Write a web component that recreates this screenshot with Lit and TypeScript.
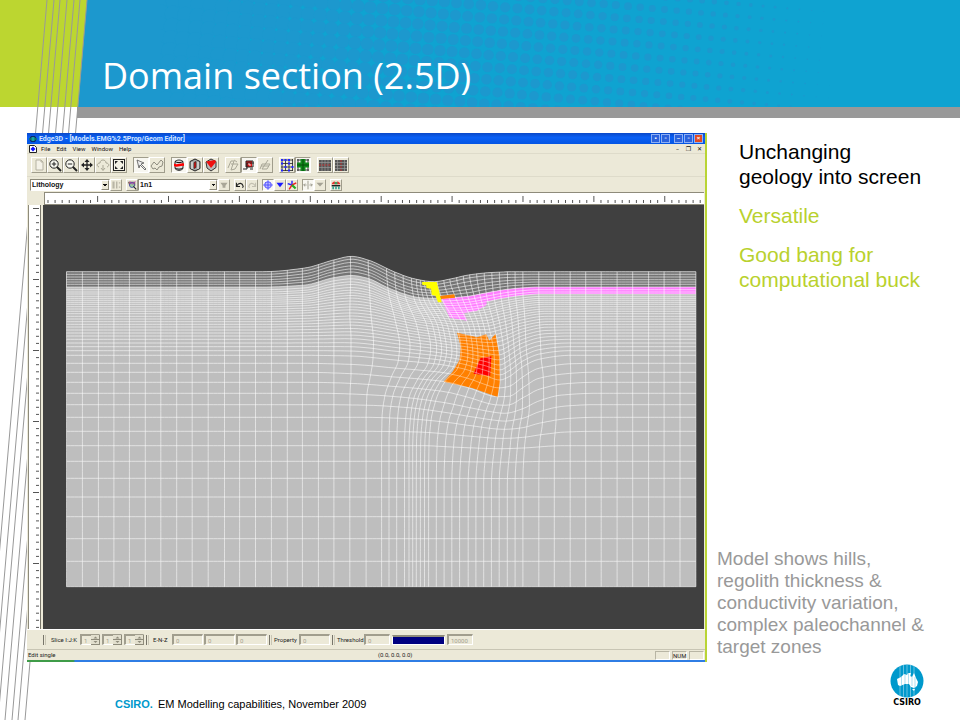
import { LitElement, html, svg, css } from "lit";
import { customElement, property } from "lit/decorators.js";

type Pair = [number, number];

/* Monotone cubic interpolation through a list of [position, value] pairs. */
function curve(p: Pair[], x: number): number {
  const n = p.length;
  if (x <= p[0][0]) return p[0][1];
  if (x >= p[n - 1][0]) return p[n - 1][1];
  let i = 0;
  while (x > p[i + 1][0]) i++;
  const slope = (k: number) => (p[k + 1][1] - p[k][1]) / (p[k + 1][0] - p[k][0]);
  const tangent = (k: number) => {
    if (k === 0 || k === n - 1) return 0;
    const a = slope(k - 1), b = slope(k);
    return a * b <= 0 ? 0 : (2 * a * b) / (a + b);
  };
  const h = p[i + 1][0] - p[i][0];
  const t = (x - p[i][0]) / h;
  return (2 * t ** 3 - 3 * t ** 2 + 1) * p[i][1] + (t ** 3 - 2 * t ** 2 + t) * h * tangent(i) +
    (-2 * t ** 3 + 3 * t ** 2) * p[i + 1][1] + (t ** 3 - t ** 2) * h * tangent(i + 1);
}

/* Vertical displacement of the mesh by depth level. */
const SINK: [number, Pair[]][] = [
  [65, [[500, 0], [600, -11], [670, -35], [715, -46], [755, -35], [820, 1], [870, 22], [915, 30], [960, 21], [1000, 10], [1050, 3], [1110, 0]]],
  [110, [[500, 0], [600, -6], [670, -28], [715, -35], [755, -26], [800, 0], [841, 20], [882, 32], [923, 34], [996, 28], [1045, 17], [1094, 7], [1127, 3], [1173, 0]]],
  [200, [[500, 0], [600, -2], [715, -10], [760, -5], [820, 10], [882, 25], [923, 32], [980, 40], [1040, 40], [1090, 26], [1134, 10], [1190, 0]]],
  [316, [[600, 0], [715, 2], [820, 14], [882, 21], [923, 26], [980, 38], [1040, 60], [1078, 74], [1100, 64], [1134, 34], [1173, 12], [1250, 0]]],
  [367, [[600, 0], [715, 4], [820, 14], [882, 20], [942, 28], [1000, 46], [1072, 73], [1100, 72], [1134, 46], [1173, 18], [1250, 3], [1300, 0]]],
  [430, [[650, 0], [750, 4], [850, 13], [942, 28], [1000, 42], [1060, 56], [1090, 60], [1134, 46], [1173, 23], [1230, 5], [1310, 0]]],
  [502, [[750, 0], [850, 4], [942, 14], [1000, 24], [1090, 36], [1134, 31], [1173, 18], [1250, 3], [1310, 0]]],
  [587, [[890, 0], [960, 4], [1080, 9], [1134, 7], [1230, 0]]],
  [640, [[900, 0], [1090, 2], [1200, 0]]],
  [720, [[0, 0], [1600, 0]]],
];

/* Horizontal displacement of the mesh by depth level. */
const SHIFT: [number, Pair[]][] = [
  [65, [[671, 0], [750, 5], [788, 12], [844, 17], [903, 21], [941, 14], [979, 9], [1010, 2], [1134, 0]]],
  [110, [[671, 0], [750, 7], [788, 15], [844, 22], [903, 32], [960, 24], [1038, 6], [1134, 0]]],
  [200, [[710, 0], [750, 12], [788, 33], [844, 55], [903, 72], [960, 56], [1038, 27], [1134, 5], [1211, 0]]],
  [270, [[671, 0], [710, 3], [750, 18], [788, 44], [844, 64], [903, 80], [960, 64], [1038, 39], [1134, 8], [1211, 2], [1288, 0]]],
  [316, [[671, 0], [710, 3], [750, 17], [788, 41], [844, 58], [903, 72], [960, 60], [1038, 40], [1134, 12], [1173, 6], [1250, 0]]],
  [367, [[671, 0], [710, 3], [750, 11], [788, 24], [844, 33], [903, 40], [960, 42], [1038, 35], [1134, 15], [1173, 11], [1211, 4], [1288, 0]]],
  [430, [[671, 0], [750, 2], [788, 8], [844, 11], [903, 17], [960, 26], [1038, 24], [1134, 16], [1173, 12], [1250, 0]]],
  [502, [[750, 0], [788, 1], [844, 3], [903, 6], [960, 12], [1038, 14], [1134, 10], [1173, 9], [1250, 0]]],
  [587, [[844, 0], [903, 1], [1000, 6], [1076, 7], [1134, 4], [1211, 0]]],
  [700, [[0, 0], [1600, 0]]],
];

const field = (levels: [number, Pair[]][], x: number, y: number) =>
  curve(levels.map(([depth, row]) => [depth, curve(row, x)] as Pair), y);

const toX = (x: number) => 60 + x / 2.45;
const toY = (y: number) => 250 + y / 3;

function meshPoint(x: number, y: number): string {
  const moved = x + field(SHIFT, x, y);
  const sunk = y + field(SINK, moved, y);
  return `${toX(moved).toFixed(1)},${toY(sunk).toFixed(1)}`;
}

const COLUMNS = [16, 55, 94, 132, 170, 209, 247, 286, 324, 363, 403, 440, 479, 518, 557, 594, 633, 671, 710,
  750, 788, 806, 825, 844, 855, 864, 873, 883, 893, 903, 922, 941, 960, 979, 1000, 1019, 1038, 1057, 1076,
  1096, 1115, 1134, 1173, 1211, 1250, 1288, 1326, 1365, 1403, 1442, 1480, 1519, 1558];
const ROWS = [65, 73, 81, 89, 96, 103, 111, 119, 126, 132, 139, 145, 151, 157, 163, 170, 177, 184, 191, 199, 207,
  215, 223, 231, 240, 249, 258, 268, 279, 290, 302, 316, 340, 367, 397, 430, 464, 502, 544, 587, 634, 685, 741,
  800, 866, 934, 1010];

const steps = (from: number, to: number, by: number) => {
  const out: number[] = [];
  for (let v = from; v < to; v += by) out.push(v);
  out.push(to);
  return out;
};
const along = (y: number, from = 16, to = 1558) => steps(from, to, 10).map((x) => meshPoint(x, y));
const down = (x: number) => steps(65, 1010, 10).map((y) => meshPoint(x, y));
const band = (top: number, bottom: number, from = 16, to = 1558) =>
  [...along(top, from, to), ...along(bottom, from, to).reverse()].join(" ");
const shape = (pts: Pair[]) => pts.map(([x, y]) => `${toX(x).toFixed(1)},${toY(y).toFixed(1)}`).join(" ");

@customElement("mesh-view")
class MeshView extends LitElement {
  static styles = css`
    :host { display: block; background: #404040; }
    svg { display: block; width: 100%; height: auto; }
    .rock { fill: #bebebe; }
    .regolith { fill: #747474; }
    .pink { fill: #ff7dff; }
    .orange { fill: #ff8000; }
    .yellow { fill: #ffff00; }
    .red { fill: #ff0000; }
    .grid { fill: none; stroke: #fff; stroke-width: 1; stroke-opacity: 0.56; }
    .target { stroke-opacity: 0.4; }
  `;
  render() {
    return html`<svg viewBox="44 205 660 424" role="img" aria-label="Finite element mesh of the domain section">
      <polygon class="rock" points=${band(65, 1010)}></polygon>
      <polygon class="regolith" points=${band(65, 111)}></polygon>
      <polygon class="pink" points=${band(111, 132, 903)}></polygon>
      <polygon class="pink" points=${shape([[935, 148], [1000, 140], [1045, 132], [1045, 165], [1022, 182], [990, 190], [998, 212], [955, 203]])}></polygon>
      ${svg`<g class="grid">
        ${ROWS.map((y) => svg`<polyline points=${along(y).join(" ")}></polyline>`)}
        ${COLUMNS.map((x) => svg`<polyline points=${down(x).join(" ")}></polyline>`)}
      </g>`}
      <polygon class="orange" points=${shape([[931, 138], [966, 133], [968, 143], [933, 147]])}></polygon>
      <polygon class="yellow" points=${shape([[887, 96], [923, 96], [929, 125], [935, 157], [926, 157], [920, 137], [911, 135], [909, 116], [898, 114], [897, 106], [888, 105]])}></polygon>
      <polygon class="orange" points=${shape([[973, 248], [1022, 262], [1044, 253], [1052, 272], [1067, 252], [1077, 320], [1078, 395], [1072, 441], [1010, 414], [940, 395], [962, 365], [979, 330], [982, 290]])}></polygon>
      <polygon class="red" points=${shape([[1030, 325], [1057, 319], [1054, 378], [1013, 371]])}></polygon>
      <clipPath id="target"><polygon points=${shape([[973, 248], [1022, 262], [1044, 253], [1052, 272], [1067, 252], [1077, 320], [1078, 395], [1072, 441], [1010, 414], [940, 395], [962, 365], [979, 330], [982, 290]])}></polygon></clipPath>
      ${svg`<g class="grid target" clip-path="url(#target)">
        ${ROWS.filter((y) => y > 180 && y < 380).map((y) => svg`<polyline points=${along(y, 860, 1100).join(" ")}></polyline>`)}
        ${COLUMNS.filter((x) => x > 860 && x < 1100).map((x) => svg`<polyline points=${down(x).join(" ")}></polyline>`)}
      </g>`}
    </svg>`;
  }
}

/* Toolbar glyphs on a 16 by 16 board. */
const ICONS: Record<string, unknown> = {
  page: svg`<path d="M5 3h5l2 2v8H5zM10 3v2h2" fill="#f4f2e8" stroke="#b5b2a2"/>`,
  zoomIn: svg`<circle cx="7" cy="7" r="4.2" fill="#f7f7f0" stroke="#222"/><path d="M10 10l4 4" stroke="#222" stroke-width="2"/><path d="M4.8 7h4.4M7 4.8v4.4" stroke="#222"/>`,
  zoomOut: svg`<circle cx="7" cy="7" r="4.2" fill="#f7f7f0" stroke="#222"/><path d="M10 10l4 4" stroke="#222" stroke-width="2"/><path d="M4.8 7h4.4" stroke="#222"/>`,
  move: svg`<path d="M8 4v8M4 8h8" stroke="#222" stroke-width="1.3"/><path d="M8 2l2.500 3h-5zM8 14l2.500-3h-5zM2 8l3-2.500v5zM14 8l-3-2.500v5z" fill="#222"/>`,
  rotate: svg`<path d="M4 10c-3-1-2-4 1-4 0-4 6-4 6 0 3 0 4 3 1 4M8 8v5M6 11l2 2.500 2-2.500" fill="none" stroke="#aaa796"/>`,
  fit: svg`<rect x="2.500" y="2.500" width="11" height="11" fill="#f3f1e4" stroke="#222"/><path d="M4 4h3L4 7zM12 4v3L9 4zM4 12V9l3 3zM12 12H9l3-3z" fill="#222"/>`,
  arrow: svg`<path d="M4 3l7 3-3 1 5 5-1 1-5-5-1 3z" fill="#eee" stroke="#555" stroke-width=".8"/>`,
  lasso: svg`<path d="M2 9l3-4 3 3 4-5 2 2-1 4-3 1-2 3-2-2-2 1z" fill="none" stroke="#8f8d80"/>`,
  layers: svg`<path d="M4 4.500c2-2 6-2 8 0v7c-2 2.500-6 2.500-8 0z" fill="#ddd" stroke="#333"/><path d="M3 6.500c3 2 7-1 10 0V9c-3-1-7 2-10 0z" fill="#f00"/><path d="M4 4.500c2 1.500 6 1.500 8 0M4 11c2 1.500 6 1.500 8 0" fill="none" stroke="#111"/>`,
  cubeMid: svg`<path d="M8 2l5 2.500v7L8 14l-5-2.500v-7z" fill="#aaa" stroke="#222"/><path d="M7 5.500l2-1v6l-2 1z" fill="#e11" stroke="#222" stroke-width=".7"/><path d="M11 5v7M5 5v7" stroke="#eee"/>`,
  cubeRed: svg`<path d="M3 5l5-3 5 2.500v6L8 14l-4-3z" fill="#bbb" stroke="#333"/><path d="M3 4.500L12 3l1 2-5 6z" fill="#f01010"/>`,
  swirlA: svg`<path d="M3 11l3-7 3 0-3 9 4-1 3-5-7 0M9 3l3 2" fill="none" stroke="#a9a797"/>`,
  swirlRed: svg`<path d="M5 4h6v6H5z" fill="#e01818"/><path d="M2 12h4V6h7M5 10V4h7v6H5M9 12h3" fill="none" stroke="#222"/><path d="M8 6v2h2" stroke="#fff" fill="none" stroke-width=".8"/>`,
  swirlB: svg`<path d="M3 12l2-5h8l-3 5H5l6-9M4 9h8" fill="none" stroke="#a9a797"/>`,
  gridBlue: svg`<path d="M2 3h12M2 6.500h12M2 10h12M2 13.500h12M3 2v12M6.500 2v12M10 2v12M13.500 2v12" stroke="#222" stroke-width=".8"/><path d="M2 2h2v2H2zM5.500 2h2v2h-2zM9 2h2v2H9zM2 5.500h2v2H2zM5.500 9h2v2h-2zM9 5.500h2v2H9zM12.500 9h2v2h-2zM9 12.500h2v2H9zM2 12.500h2v2H2z" fill="#22f"/>`,
  gridGreen: svg`<path d="M2 3h12M2 8h12M2 13h12M3 2v12M13 2v12" stroke="#222" stroke-width=".9"/><path d="M5.500 2h5v3.500H14v5h-3.500V14h-5v-3.500H2v-5h3.500z" fill="#118a1c"/><path d="M8 2v12M2 8h12" stroke="#064a0a"/>`,
  rowsRed: svg`<rect x="2" y="3" width="12" height="11" fill="#555"/><path d="M2 5.500h12M2 10.500h12M5 3v11M8 3v11M11 3v11" stroke="#999" stroke-width=".7"/><path d="M2 8h12" stroke="#b33" stroke-dasharray="2 1"/>`,
  colsRed: svg`<rect x="2" y="3" width="12" height="11" fill="#555"/><path d="M2 5.500h12M2 8.500h12M2 11.500h12M4.500 3v11M11.500 3v11" stroke="#999" stroke-width=".7"/><path d="M8 3v11" stroke="#b33" stroke-dasharray="2 1"/>`,
  bars: svg`<path d="M3 3h3v10H3zM8 3h2v10H8zM12 4h2v2h-2zM12 10h2v2h-2z" fill="#b9b6a6"/>`,
  pick: svg`<path d="M3 4h9v5H5z" fill="#e66" stroke="#555"/><circle cx="8" cy="8" r="3.500" fill="#9c9" stroke="#33a"/><path d="M10 10l4 4" stroke="#222" stroke-width="1.500"/><path d="M5 3l3 4 5-4" stroke="#b2b" fill="none"/>`,
  drop: svg`<path d="M3 5h10l-3 4v3H6V9z" fill="#aaa798"/>`,
  undo: svg`<path d="M3 5v5h5M3.500 9c3-5 8-4 9 1l-1 2" fill="none" stroke="#222" stroke-width="1.500"/>`,
  redo: svg`<path d="M13 5v5H8M12.500 9c-3-5-8-4-9 1l1 2" fill="none" stroke="#c2bfb0" stroke-width="1.500"/>`,
  node: svg`<path d="M8 1l3 3h-6zM8 15l3-3H5zM1 8l3-3v6zM15 8l-3-3v6z" fill="#77f"/><rect x="4.500" y="4.500" width="7" height="7" fill="#bbf" stroke="#55f"/><path d="M8 5v6M5 8h6" stroke="#33f"/>`,
  triBlue: svg`<path d="M3 5h10l-5 6z" fill="#1a1aff"/>`,
  star: svg`<path d="M8 8V2M8 8l-6-2" stroke="#22f" stroke-width="2"/><path d="M8 8l6-3M8 8l-4 6" stroke="#e22" stroke-width="2"/><path d="M8 8l5 5" stroke="#2a2" stroke-width="3"/>`,
  split: svg`<path d="M8 2v12M2 8h4M10 8h4M4 6L2 8l2 2M12 6l2 2-2 2" fill="none" stroke="#99978a" stroke-width="1.300"/>`,
  triGrey: svg`<path d="M3 5h10l-5 5z" fill="#a5a294"/>`,
  people: svg`<path d="M2 8h12v2H2z" fill="#222"/><path d="M3 10h2v4H3zM7 10h2v4H7zM11 10h2v4h-2z" fill="#1a9a8a"/><path d="M2 7c1-4 4-5 6-3 2-2 5-1 6 3z" fill="#e33"/><path d="M6 4h4v3H6z" fill="#3a6"/>`,
};

@customElement("tool-button")
class ToolButton extends LitElement {
  @property() icon = "";
  @property() label = "";
  @property({ type: Boolean, reflect: true }) pressed = false;
  @property({ type: Boolean, reflect: true }) small = false;
  static styles = css`
    :host { display: block; width: 16px; height: 16px; flex: none; }
    :host([small]) { width: 12px; height: 12px; }
    button {
      display: block; width: 100%; height: 100%; padding: 0; box-sizing: border-box; background: #ece9d8;
      border: 1px solid; border-color: #fff #a09d8c #a09d8c #fff;
    }
    .pressed { background: #f8f7f1; border-color: #a09d8c #fff #fff #a09d8c; }
    svg { display: block; width: 100%; height: 100%; }
  `;
  render() {
    return html`<button class=${this.pressed ? "pressed" : ""} aria-label=${this.label} aria-pressed=${this.pressed}>
      <svg viewBox="1 1 14 14">${ICONS[this.icon]}</svg>
    </button>`;
  }
}

type Tool = [icon: string, label: string, pressed?: boolean];
const MAIN_TOOLS: Tool[][] = [
  [["page", "New"], ["zoomIn", "Zoom in"], ["zoomOut", "Zoom out"], ["move", "Pan"], ["rotate", "Rotate"], ["fit", "Fit"]],
  [["arrow", "Select", true], ["lasso", "Lasso"]],
  [["layers", "Layers", true], ["cubeMid", "Section"], ["cubeRed", "Face"]],
  [["swirlA", "Slice I"], ["swirlRed", "Slice J", true], ["swirlB", "Slice K"]],
  [["gridBlue", "Nodes"], ["gridGreen", "Cells", true]],
  [["rowsRed", "Insert row"], ["colsRed", "Insert column"]],
];
const EDIT_TOOLS: Tool[][] = [
  [["undo", "Undo"], ["redo", "Redo"]],
  [["node", "Node mode", true], ["triBlue", "Node options"], ["star", "Axes"]],
  [["split", "Split", true], ["triGrey", "Split options"]],
  [["people", "Receivers"]],
];

@customElement("editor-window")
class EditorWindow extends LitElement {
  static styles = css`
    :host {
      display: block; position: relative; background: #ece9d8; border-right: 2px solid #b9d435;
      font: 6px/10px Roboto, "Liberation Sans", Arial, sans-serif; color: #222;
    }
    button, input, select { font: inherit; color: inherit; margin: 0; border-radius: 0; }
    .bar { display: flex; align-items: center; box-sizing: border-box; }
    .title { height: 11px; padding: 0 2px; gap: 2px; background: linear-gradient(#0a48c8, #0a60f4 40%, #0455e4); color: #d4e4ff; font-size: 7px; font-weight: bold; }
    .mark { width: 8px; height: 8px; flex: none; display: block; }
    .grow { flex: 1; }
    .caps { display: flex; gap: 1px; align-items: center; }
    .caps button { width: 9px; height: 9px; padding: 0; border: 1px solid #8fb0f4; background: #2c62dc; color: #fff; font: bold 6px/7px "Liberation Sans", sans-serif; display: block; }
    .caps .first { margin-right: 3px; }
    .caps .close { background: #e04a22; }
    .menu { height: 10px; padding: 0 2px; border-bottom: 1px solid #dedbca; gap: 2px; }
    .menu button { border: 0; background: none; padding: 0; line-height: 9px; color: #111; }
    .menu .items { display: flex; gap: 6px; padding-left: 2px; }
    .menu .doc { display: flex; gap: 4px; font-family: "DejaVu Sans", sans-serif; }
    .menu .doc button { width: 7px; }
    .tools { height: 22px; padding: 0 4px; gap: 6px; }
    .tools.edit { height: 16px; padding: 0 3px; gap: 4px; border-top: 1px solid #dedbca; }
    .group { display: flex; }
    .combo { position: relative; display: flex; width: 80px; height: 12px; }
    .combo select {
      appearance: none; width: 100%; box-sizing: border-box; border: 1px solid; border-color: #8e8b7b #fff #fff #8e8b7b;
      background: #fff; padding: 0 1px; font: bold 7px/9px "Liberation Sans", sans-serif; color: #111;
    }
    .combo::after {
      content: ""; position: absolute; right: 1px; top: 1px; width: 8px; height: 10px; pointer-events: none; box-sizing: border-box;
      background: conic-gradient(from -45deg at 50% 100%, #111 90deg, transparent 0) center / 4px 2px no-repeat, #ece9d8;
      border: 1px solid; border-color: #fff #8e8b7b #8e8b7b #fff;
    }
    .work { display: grid; grid-template-columns: 17px minmax(0, 1fr); margin-right: 1px; }
    .hruler { display: block; width: 100%; height: 13px; background: #fff; border-top: 1px solid #8e8b7b; border-left: 1px solid #8e8b7b; border-bottom: 1px solid #8e8b7b; box-sizing: border-box; }
    .vwrap { position: relative; display: flex; background: #fff; margin-left: 1px; border-left: 1px solid #8e8b7b; border-right: 1px solid #404040; box-shadow: inset -2px 0 #ece9d8, inset -3px 0 #77756a; }
    .vruler { position: absolute; left: 0; top: 0; width: 11px; height: 100%; }
    .tick { stroke: #555; stroke-width: 1; }
    .controls { height: 21px; padding: 0 16px; gap: 2px; border-bottom: 1px solid #c8c5b4; border-top: 1px solid #fff; font-size: 6px; }
    .controls .sep { width: 1px; height: 10px; border-left: 1px solid #77756a; border-right: 1px solid #c9c6b5; }
    .controls label { display: flex; align-items: center; gap: 2px; }
    .controls .name { width: 27px; padding-left: 3px; white-space: nowrap; }
    .controls .axis { width: 17px; padding-left: 2px; white-space: nowrap; }
    .controls .prop { width: 23px; white-space: nowrap; }
    .controls .thresh { width: 25px; white-space: nowrap; }
    .controls input {
      box-sizing: border-box; height: 11px; min-width: 0; padding: 0 2px; border: 1px solid; border-width: 2px 1px 1px 2px;
      border-color: #a19e8e #fff #fff #a19e8e; background: #ece9d8; color: #a5a292; font-size: 6px;
    }
    .spin { position: relative; display: flex; }
    .spin input { width: 20px; }
    .spin svg { position: absolute; right: 0; top: 1px; width: 9px; height: 10px; }
    .three { display: flex; gap: 2px; }
    .three.values { gap: 1px; }
    .three.values input, .single { width: 31px; }
    .limit { width: 26px; }
    .span { width: 53px; height: 10px; box-sizing: border-box; border: 1px solid #fff; border-top: 2px solid #8e8b7b; background: #000080; }
    .status { display: grid; grid-template-columns: 6fr auto 5fr; height: 10px; padding: 0 1px; align-items: center; border-bottom: 2px solid #2f7de4; border-image: linear-gradient(90deg, #3f9c48 48px, #2f7de4 50px) 2; font-size: 6px; }
    .cells { display: flex; justify-content: flex-end; gap: 2px; }
    .cells span { width: 13px; height: 7px; line-height: 8px; border: 1px solid; border-color: #b8b5a4 #fff #fff #b8b5a4; text-align: center; }
  `;

  private group(tools: Tool[], small: boolean) {
    return html`<div class="group">${tools.map(([icon, label, pressed]) =>
      html`<tool-button icon=${icon} label=${label} ?pressed=${!!pressed} ?small=${small}></tool-button>`)}</div>`;
  }

  private spinner(axis: string) {
    return html`<span class="spin"><input aria-label=${"Slice " + axis} value="1" disabled>
      <svg viewBox="0 0 9 10"><path d="M0 0h9v10H0z" fill="#e2dfce"/><path d="M0 4.500h9M0 9.500h9M8.500 0v10" stroke="#8e8b7b"/><path d="M4.500 1.500l2 2h-4zM4.500 8l2-2h-4z" fill="#8e8b7b"/></svg></span>`;
  }

  render() {
    const across = Array.from({ length: 93 }, (_, i) => i);
    const downTicks = Array.from({ length: 60 }, (_, i) => i);
    const mark = html`<svg class="mark" viewBox="0 0 8 8"><path d="M0 4l2-3h4l2 3-2 3H2z" fill="#0a2a6a"/><path d="M2.500 2h3v4h-3z" fill="#19a2a2"/><path d="M0 4h3M5 4h3" stroke="#1a6"/></svg>`;
    return html`
      <div class="bar title">${mark}<span>Edge3D - [Models.EMG%2.5Prop/Geom Editor]</span><span class="grow"></span>
        <span class="caps"><button aria-label="Dock">▪</button><button class="first" aria-label="Float">▫</button>
          <button aria-label="Minimize">–</button><button aria-label="Restore">▫</button><button class="close" aria-label="Close">×</button></span>
      </div>
      <div class="bar menu">
        <svg class="mark" viewBox="0 0 8 8"><path d="M.5 .5h5l2 2v5h-7z" fill="#fff" stroke="#222"/><path d="M1.500 4L4 1.500 6.500 4 4 6.500z" fill="#11f"/></svg>
        <span class="items">${["File", "Edit", "View", "Window", "Help"].map((m) => html`<button>${m}</button>`)}</span>
        <span class="grow"></span>
        <span class="doc"><button aria-label="Minimize document">–</button><button aria-label="Restore document">❐</button><button aria-label="Close document">✕</button></span>
      </div>
      <div class="bar tools">${MAIN_TOOLS.map((g) => this.group(g, false))}</div>
      <div class="bar tools edit">
        <div class="group"><span class="combo"><select aria-label="Property"><option>Lithology</option></select></span>${this.group([["bars", "Legend"]], true)}</div>
        <div class="group">${this.group([["pick", "Pick"]], true)}<span class="combo"><select aria-label="Material"><option>1n1</option></select></span>${this.group([["drop", "Apply"]], true)}</div>
        ${EDIT_TOOLS.map((g) => this.group(g, true))}
      </div>
      <div class="work">
        <span></span>
        <svg class="hruler" viewBox="0 0 660 12" preserveAspectRatio="xMinYMin slice">
          ${across.map((i) => { const x = 3 + i * 7.1; const major = i % 10 === 7;
            return svg`<line class="tick" x1=${x} x2=${x} y1=${major ? 3 : 7} y2=${major ? 9 : 10}></line>`; })}
        </svg>
        <div class="vwrap"><svg class="vruler" viewBox="0 0 11 424" preserveAspectRatio="xMinYMin slice">
          ${downTicks.map((i) => { const y = 3.5 + i * 7.1; const major = i % 10 === 0;
            return svg`<line class="tick" y1=${y} y2=${y} x1=${major ? 4 : 7} x2="10"></line>`; })}
        </svg></div>
        <mesh-view></mesh-view>
      </div>
      <div class="bar controls">
        <span class="sep"></span><span class="name">Slice I:J:K</span>
        <span class="three">${["I", "J", "K"].map((a) => this.spinner(a))}</span>
        <span class="sep"></span><span class="axis">E-N-Z</span>
        <span class="three values">${["E", "N", "Z"].map((a) => html`<input aria-label=${a} value="0" disabled>`)}</span>
        <span class="sep"></span><label><span class="prop">Property</span><input class="single" value="0" disabled></label>
        <span class="sep"></span><label><span class="thresh">Threshold</span><input class="limit" value="0" disabled></label>
        <span class="span"></span><input class="limit" aria-label="Upper threshold" value="10000" disabled>
      </div>
      <div class="status"><span>Edit single</span><span>(0.0, 0.0, 0.0)</span>
        <span class="cells"><span></span><span>NUM</span><span></span></span></div>
    `;
  }
}

/* Halftone dots that thin out towards the right of the banner. */
const DOT_SIZE: Pair[] = [[150, 8.6], [400, 5.9], [560, 4.6], [700, 2.9], [870, 0]];
const DOTS: [number, number, number][] = [];
for (let i = -55; i < 15; i++) {
  for (let j = -8; j < 20; j++) {
    const x = 714.3 + i * 12.17 - j * 1.1;
    const y = 1.7 + i * 1.1 + j * 12.17;
    const r = curve(DOT_SIZE, x);
    if (x > 70 && y > -8 && y < 116 && r > 0.3) DOTS.push([x, y, r]);
  }
}
for (let i = -55; i < 0; i++) {
  for (let j = -20; j < 70; j++) {
    if (j >= -8 && j < 20) continue;
    const x = 714.3 + i * 12.17 - j * 1.1;
    const y = 1.7 + i * 1.1 + j * 12.17;
    if (x > 70 && y > -8 && y < 116) DOTS.push([x, y, curve(DOT_SIZE, x)]);
  }
}

@customElement("app-root")
class AppRoot extends LitElement {
  static styles = css`
    :host {
      display: flex; flex-direction: column; position: relative; min-height: 100vh; overflow: hidden; background: #fff;
      font-family: "Liberation Sans", Arial, sans-serif;
    }
    header { position: relative; height: 119px; overflow: hidden; }
    .banner { position: absolute; left: 0; top: 0; width: 100%; height: 119px; }
    .stripes { position: absolute; left: 0; top: 0; width: 100px; height: 720px; }
    .stripe { stroke: #999; stroke-width: 1; }
    h1 { position: relative; margin: 0; padding: 52px 0 0 102px; font: 400 36px/48px "Open Sans", "Noto Sans", sans-serif; color: #fff; white-space: nowrap; }
    main { position: relative; display: grid; grid-template-columns: minmax(0, 680fr) minmax(0, 253fr); padding: 14px 0 0 27px; }
    aside { display: flex; flex-direction: column; justify-content: space-between; }
    ul { list-style: none; margin: 0; padding: 6px 0 0 32px; font-size: 21px; line-height: 25px; color: #b9d12d; display: grid; gap: 14px; }
    .lead { color: #000; }
    .note { margin: 0; padding: 0 0 4px 10px; font-size: 19px; line-height: 22px; color: #999; }
    footer { position: relative; display: flex; justify-content: space-between; align-items: flex-start; padding: 2px 36px 0 115px; font-size: 11px; line-height: 14px; color: #000; }
    .credit { margin: 0; padding-top: 33px; }
    .brand { color: #0099cc; padding-right: 2px; }
    .logo { display: grid; justify-items: center; width: 34px; }
    .logo svg { width: 34px; height: 34px; display: block; }
    .logo span { font: bold 8px/9px "DejaVu Sans", sans-serif; }
  `;
  render() {
    const starts = [47, 54, 60, 67, 74, 80, 87];
    return html`
      <header>
        <svg class="banner" viewBox="0 0 960 119" preserveAspectRatio="xMinYMin slice">
          <rect width="960" height="107" fill="#0fa3d1"></rect>
          ${DOTS.map(([x, y, r]) => svg`<circle cx=${x.toFixed(1)} cy=${y.toFixed(1)} r=${r.toFixed(1)} fill="#1c98ce"></circle>`)}
          <path d="M70 0h90v107H70z" fill="#1c98ce"></path>
          <path d="M0 107h960v12H0z" fill="#fff"></path>
          <path d="M77 107h883v11H77z" fill="#999"></path>
          <path d="M0 0h87l-9 107H0z" fill="#bcd630"></path>
        </svg>
        <h1>Domain section (2.5D)</h1>
      </header>
      <svg class="stripes" viewBox="0 0 100 720">
        ${starts.map((x) => svg`<line class="stripe" x1=${x} y1="0" x2=${x - 62} y2="720"></line>`)}
      </svg>
      <main>
        <editor-window></editor-window>
        <aside>
          <ul>
            <li class="lead">Unchanging<br>geology into screen</li>
            <li>Versatile</li>
            <li>Good bang for<br>computational buck</li>
          </ul>
          <p class="note">Model shows hills,<br>regolith thickness &amp;<br>conductivity variation,<br>complex paleochannel &amp;<br>target zones</p>
        </aside>
      </main>
      <footer>
        <p class="credit"><strong class="brand">CSIRO.</strong> EM Modelling capabilities, November 2009</p>
        <div class="logo">
          <svg viewBox="0 0 34 34" aria-hidden="true">
            <circle cx="17" cy="17" r="16.500" fill="#0099cc"></circle>
            <path d="M10 2v30M13.500 1v32M17 1v32M20.500 1v32M24 2v30" stroke="#7fcbe6" stroke-width=".8"></path>
            <path d="M7 15l4-2 3-3 3 1 1-2h3l-1 3 2 1 2-4 2 5 2 4-1 4-3 2-3-1-2-3h-4l-5 2-2-1z" fill="#fff"></path>
            <path d="M22 25h3l-1 2z" fill="#fff"></path>
            <path d="M11.500 13v8M15 10v10M18.500 9v11M22 12v10M25 13v11" stroke="#8fd2ea" stroke-width=".7"></path>
          </svg>
          <span>CSIRO</span>
        </div>
      </footer>
    `;
  }
}
